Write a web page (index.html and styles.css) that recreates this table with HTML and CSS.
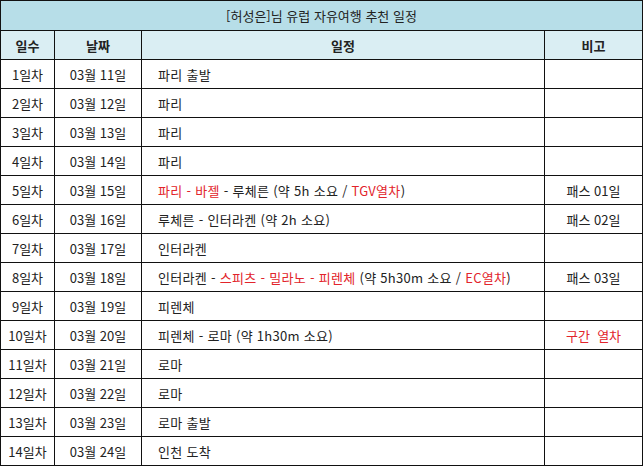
FILE: index.html
```html
<!DOCTYPE html>
<html lang="ko">
<head>
<meta charset="utf-8">
<title>유럽 자유여행 추천 일정</title>
<link rel="stylesheet" href="styles.css">
</head>
<body>
<div class="sheet">
  <div class="cell title">[허성은]님 유럽 자유여행 추천 일정</div>
  <div class="cell head">일수</div>
  <div class="cell head">날짜</div>
  <div class="cell head">일정</div>
  <div class="cell head">비고</div>

  <div class="cell">1일차</div><div class="cell">03월 11일</div><div class="cell plan">파리 출발</div><div class="cell"></div>
  <div class="cell">2일차</div><div class="cell">03월 12일</div><div class="cell plan">파리</div><div class="cell"></div>
  <div class="cell">3일차</div><div class="cell">03월 13일</div><div class="cell plan">파리</div><div class="cell"></div>
  <div class="cell">4일차</div><div class="cell">03월 14일</div><div class="cell plan">파리</div><div class="cell"></div>
  <div class="cell">5일차</div><div class="cell">03월 15일</div><div class="cell plan"><span><span class="red">파리 - 바젤</span> - 루체른 (약 5h 소요 / <span class="red">TGV열차</span>)</span></div><div class="cell">패스 01일</div>
  <div class="cell">6일차</div><div class="cell">03월 16일</div><div class="cell plan">루체른 - 인터라켄 (약 2h 소요)</div><div class="cell">패스 02일</div>
  <div class="cell">7일차</div><div class="cell">03월 17일</div><div class="cell plan">인터라켄</div><div class="cell"></div>
  <div class="cell">8일차</div><div class="cell">03월 18일</div><div class="cell plan"><span>인터라켄 - <span class="red">스피츠 - 밀라노 - 피렌체</span> (약 5h30m 소요 / <span class="red">EC열차</span>)</span></div><div class="cell">패스 03일</div>
  <div class="cell">9일차</div><div class="cell">03월 19일</div><div class="cell plan">피렌체</div><div class="cell"></div>
  <div class="cell">10일차</div><div class="cell">03월 20일</div><div class="cell plan">피렌체 - 로마 (약 1h30m 소요)</div><div class="cell red">구간&nbsp;&nbsp;열차</div>
  <div class="cell">11일차</div><div class="cell">03월 21일</div><div class="cell plan">로마</div><div class="cell"></div>
  <div class="cell">12일차</div><div class="cell">03월 22일</div><div class="cell plan">로마</div><div class="cell"></div>
  <div class="cell">13일차</div><div class="cell">03월 23일</div><div class="cell plan">로마 출발</div><div class="cell"></div>
  <div class="cell">14일차</div><div class="cell">03월 24일</div><div class="cell plan">인천 도착</div><div class="cell"></div>
</div>
</body>
</html>
```

FILE: styles.css
```css
html, body {
  margin: 0;
  padding: 0;
  background: #ffffff;
}

body {
  font-family: "Noto Sans CJK KR", "Noto Sans", sans-serif;
  font-size: 13px;
  color: #222222;
}

.sheet {
  display: grid;
  width: 643px;
  box-sizing: border-box;
  grid-template-columns: 53px 86px 402px 97px;
  grid-template-rows: 29px;
  grid-auto-rows: 28px;
  gap: 1px;
  padding: 1px;
  background: #111111;
}

.cell {
  background: #ffffff;
  display: flex;
  align-items: center;
  justify-content: center;
  white-space: nowrap;
  line-height: 1;
}

.title {
  grid-column: 1 / -1;
  background: #b7dee8;
}

.head {
  background: #daeef3;
  font-weight: bold;
}

.plan {
  justify-content: flex-start;
  padding-left: 16px;
  letter-spacing: 0.3px;
}

.red {
  color: #e2242b;
}
```
